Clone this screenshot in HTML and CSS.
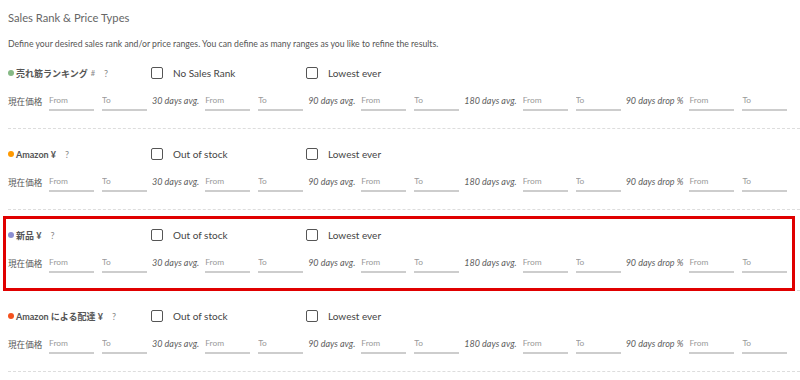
FILE: index.html
```html
<!DOCTYPE html>
<html lang="ja">
<head>
  <meta charset="UTF-8">
  <meta name="viewport" content="width=device-width, initial-scale=1.0">
  <title>Sales Rank &amp; Price Types</title>
  <link rel="stylesheet" href="styles.css">
</head>
<body>
  <div class="panel">
    <h2 class="judul">Sales Rank &amp; Price Types</h2>
    <p class="keterangan">Define your desired sales rank and/or price ranges. You can define as many ranges as you like to refine the results.</p>

    <div class="tipe">
      <div class="kepala">
        <div class="nama"><span class="titik hijau"></span><b>売れ筋ランキング</b><span class="pagar">#</span><span class="tanya">?</span></div>
        <label class="cek"><input type="checkbox"> No Sales Rank</label>
        <label class="cek"><input type="checkbox"> Lowest ever</label>
      </div>
      <div class="baris">
        <div class="grup"><span class="label-jp">現在価格</span><input type="text" placeholder="From"><input type="text" placeholder="To"></div>
        <div class="grup"><span class="label">30 days avg.</span><input type="text" placeholder="From"><input type="text" placeholder="To"></div>
        <div class="grup"><span class="label">90 days avg.</span><input type="text" placeholder="From"><input type="text" placeholder="To"></div>
        <div class="grup"><span class="label">180 days avg.</span><input type="text" placeholder="From"><input type="text" placeholder="To"></div>
        <div class="grup"><span class="label">90 days drop %</span><input type="text" placeholder="From"><input type="text" placeholder="To"></div>
      </div>
    </div>

    <div class="tipe">
      <div class="kepala">
        <div class="nama"><span class="titik oranye"></span><b>Amazon ¥</b><span class="tanya">?</span></div>
        <label class="cek"><input type="checkbox"> Out of stock</label>
        <label class="cek"><input type="checkbox"> Lowest ever</label>
      </div>
      <div class="baris">
        <div class="grup"><span class="label-jp">現在価格</span><input type="text" placeholder="From"><input type="text" placeholder="To"></div>
        <div class="grup"><span class="label">30 days avg.</span><input type="text" placeholder="From"><input type="text" placeholder="To"></div>
        <div class="grup"><span class="label">90 days avg.</span><input type="text" placeholder="From"><input type="text" placeholder="To"></div>
        <div class="grup"><span class="label">180 days avg.</span><input type="text" placeholder="From"><input type="text" placeholder="To"></div>
        <div class="grup"><span class="label">90 days drop %</span><input type="text" placeholder="From"><input type="text" placeholder="To"></div>
      </div>
    </div>

    <div class="tipe sorot">
      <div class="kepala">
        <div class="nama"><span class="titik ungu"></span><b>新品 ¥</b><span class="tanya">?</span></div>
        <label class="cek"><input type="checkbox"> Out of stock</label>
        <label class="cek"><input type="checkbox"> Lowest ever</label>
      </div>
      <div class="baris">
        <div class="grup"><span class="label-jp">現在価格</span><input type="text" placeholder="From"><input type="text" placeholder="To"></div>
        <div class="grup"><span class="label">30 days avg.</span><input type="text" placeholder="From"><input type="text" placeholder="To"></div>
        <div class="grup"><span class="label">90 days avg.</span><input type="text" placeholder="From"><input type="text" placeholder="To"></div>
        <div class="grup"><span class="label">180 days avg.</span><input type="text" placeholder="From"><input type="text" placeholder="To"></div>
        <div class="grup"><span class="label">90 days drop %</span><input type="text" placeholder="From"><input type="text" placeholder="To"></div>
      </div>
    </div>

    <div class="tipe">
      <div class="kepala">
        <div class="nama"><span class="titik merah"></span><b>Amazon による配達 ¥</b><span class="tanya">?</span></div>
        <label class="cek"><input type="checkbox"> Out of stock</label>
        <label class="cek"><input type="checkbox"> Lowest ever</label>
      </div>
      <div class="baris">
        <div class="grup"><span class="label-jp">現在価格</span><input type="text" placeholder="From"><input type="text" placeholder="To"></div>
        <div class="grup"><span class="label">30 days avg.</span><input type="text" placeholder="From"><input type="text" placeholder="To"></div>
        <div class="grup"><span class="label">90 days avg.</span><input type="text" placeholder="From"><input type="text" placeholder="To"></div>
        <div class="grup"><span class="label">180 days avg.</span><input type="text" placeholder="From"><input type="text" placeholder="To"></div>
        <div class="grup"><span class="label">90 days drop %</span><input type="text" placeholder="From"><input type="text" placeholder="To"></div>
      </div>
    </div>
  </div>
</body>
</html>
```

FILE: styles.css
```css
body {
  margin: 0;
  background: #fff;
  font-family: Lato, "Noto Sans CJK JP", sans-serif;
  color: #555;
}
.panel {
  padding: 8px 0 0 8px;
}
.judul {
  margin: 2px 0 0;
  font-size: 11.2px;
  line-height: 16px;
  font-weight: normal;
  color: #666;
}
.keterangan {
  margin: 11px 0 0;
  font-size: 8.7px;
  line-height: 14px;
  color: #555;
}
.tipe {
  padding: 17px 0;
  border-bottom: 1px dashed #ddd;
}
.tipe:first-of-type {
  padding-top: 14px;
}
.sorot {
  position: relative;
}
.sorot::after {
  content: "";
  position: absolute;
  top: 6px;
  left: -5px;
  right: 5px;
  bottom: -1px;
  border: 3px solid #e00000;
  pointer-events: none;
}
.kepala {
  display: flex;
  align-items: center;
  height: 16px;
}
.nama {
  display: flex;
  align-items: center;
  width: 143px;
  font-size: 9px;
  color: #555;
}
.nama b {
  font-family: Lato, "Noto Sans CJK JP", sans-serif;
  font-weight: bold;
}
.titik {
  width: 6px;
  height: 6px;
  border-radius: 50%;
  margin: 0 2px 0 0;
}
.hijau { background: #86b985; }
.oranye { background: #ff9900; }
.ungu { background: #8c8fd2; }
.merah { background: #f4511e; }
.pagar {
  margin-left: 3px;
  font-size: 7.5px;
  color: #888;
}
.tanya {
  margin-left: 9px;
  color: #888;
  font-size: 9px;
}
.cek {
  display: flex;
  align-items: center;
  width: 155px;
  font-size: 10px;
  color: #444;
}
.cek input {
  appearance: none;
  width: 12px;
  height: 12px;
  margin: 0 10px 0 0;
  border: 1.5px solid #555;
  border-radius: 2px;
  background: #fff;
}
.baris {
  display: flex;
  align-items: center;
  margin-top: 9px;
}
.grup {
  display: flex;
  align-items: center;
  margin-right: 5px;
}
.label, .label-jp {
  margin-right: 6px;
  white-space: nowrap;
  font-size: 9px;
  color: #5e5e5e;
}
.label {
  font-style: italic;
}
.label-jp {
  width: 35px;
  font-size: 8.6px;
  font-family: "Noto Sans CJK JP", sans-serif;
  color: #555;
}
.grup input {
  width: 45px;
  height: 21px;
  box-sizing: border-box;
  padding: 0;
  border: none;
  border-bottom: 2px solid #cdcdcd;
  font-family: inherit;
  font-size: 8.4px;
  color: #555;
  outline: none;
}
.grup input + input {
  margin-left: 8px;
}
.grup input::placeholder {
  color: #999;
}
```
